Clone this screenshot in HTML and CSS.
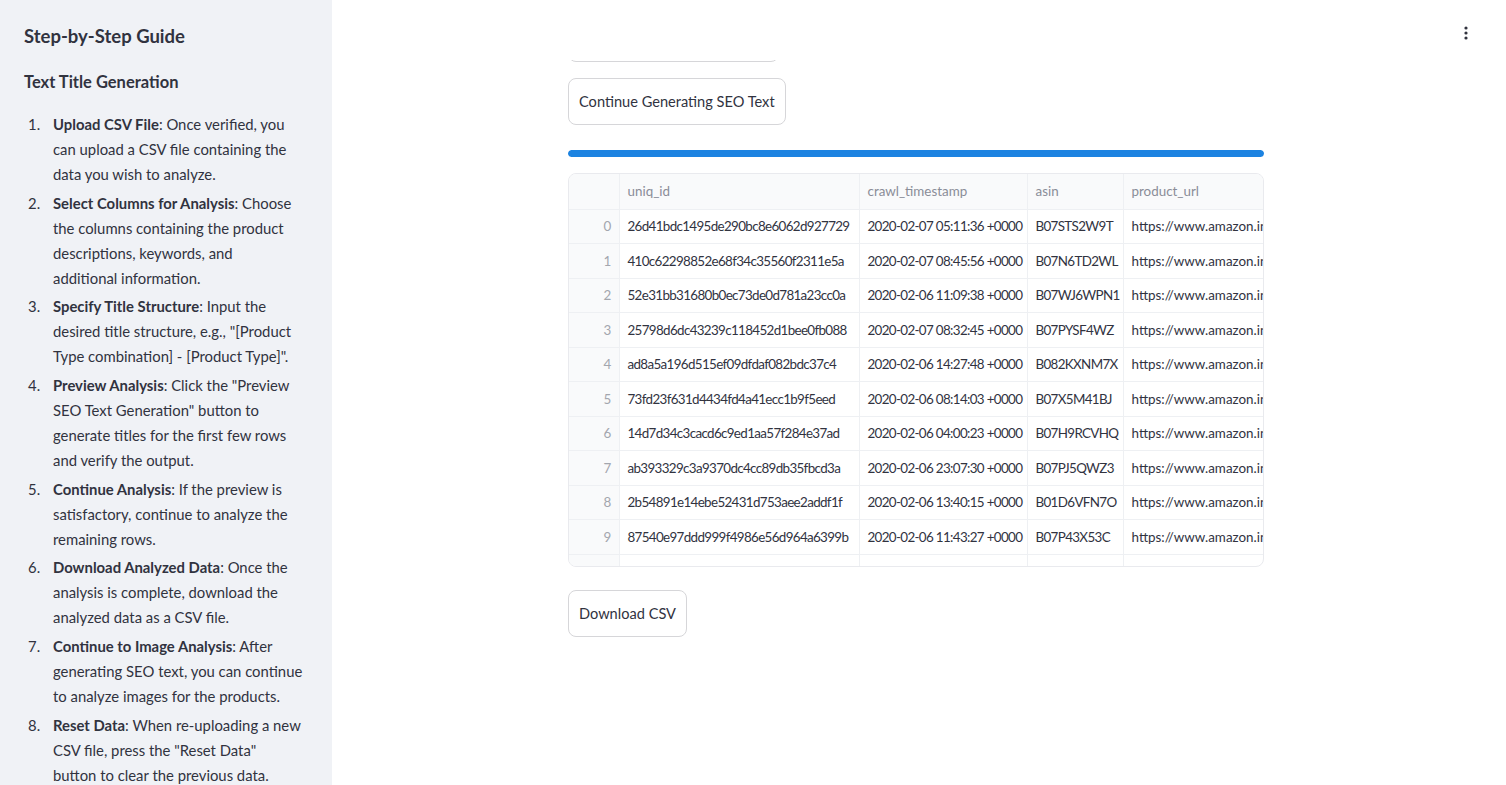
FILE: index.html
```html
<!DOCTYPE html>
<html lang="en">
<head>
<meta charset="utf-8">
<title>SEO Text Generation</title>
<link rel="stylesheet" href="styles.css">
</head>
<body>
<aside class="sidebar">
  <h2 class="guide-title">Step-by-Step Guide</h2>
  <h3 class="guide-sub">Text Title Generation</h3>
  <ol class="steps">
    <li><b>Upload CSV File</b>: Once verified, you can upload a CSV file containing the data you wish to analyze.</li>
    <li><b>Select Columns for Analysis</b>: Choose the columns containing the product descriptions, keywords, and <span class="nowrap">additional information.</span></li>
    <li><b>Specify Title Structure</b>: Input the desired title structure, e.g., "[Product Type combination] - [Product Type]".</li>
    <li><b>Preview Analysis</b>: Click the "Preview SEO Text Generation" button to generate titles for the first few rows and verify the output.</li>
    <li><b>Continue Analysis</b>: If the preview is satisfactory, continue to analyze the remaining rows.</li>
    <li><b>Download Analyzed Data</b>: Once the analysis is complete, download the analyzed data as a CSV file.</li>
    <li><b>Continue to Image Analysis</b>: After generating SEO text, you can continue to analyze images for the products.</li>
    <li><b>Reset Data</b>: When re-uploading a new CSV file, press the "Reset Data" <span class="nowrap">button to</span> clear the previous data.</li>
  </ol>
</aside>
<main class="main">
  <header class="topbar">
    <button class="menu" aria-label="menu">
      <svg width="4" height="14" viewBox="0 0 4 14"><circle cx="2" cy="2" r="1.6" fill="#31333f"/><circle cx="2" cy="7" r="1.6" fill="#31333f"/><circle cx="2" cy="12" r="1.6" fill="#31333f"/></svg>
    </button>
  </header>
  <div class="block">
    <button class="btn btn-hidden">Preview SEO Text Generation</button>
    <button class="btn">Continue Generating SEO Text</button>
    <div class="progress"><div class="progress-fill"></div></div>
    <div class="table-wrap">
      <table class="df">
        <thead>
          <tr><th class="idx"></th><th class="c1">uniq_id</th><th class="c2">crawl_timestamp</th><th class="c3">asin</th><th class="c4">product_url</th></tr>
        </thead>
        <tbody>
          <tr><td class="idx">0</td><td>26d41bdc1495de290bc8e6062d927729</td><td>2020-02-07 05:11:36 +0000</td><td>B07STS2W9T</td><td>https://www.amazon.in</td></tr>
          <tr><td class="idx">1</td><td>410c62298852e68f34c35560f2311e5a</td><td>2020-02-07 08:45:56 +0000</td><td>B07N6TD2WL</td><td>https://www.amazon.in</td></tr>
          <tr><td class="idx">2</td><td>52e31bb31680b0ec73de0d781a23cc0a</td><td>2020-02-06 11:09:38 +0000</td><td>B07WJ6WPN1</td><td>https://www.amazon.in</td></tr>
          <tr><td class="idx">3</td><td>25798d6dc43239c118452d1bee0fb088</td><td>2020-02-07 08:32:45 +0000</td><td>B07PYSF4WZ</td><td>https://www.amazon.in</td></tr>
          <tr><td class="idx">4</td><td>ad8a5a196d515ef09dfdaf082bdc37c4</td><td>2020-02-06 14:27:48 +0000</td><td>B082KXNM7X</td><td>https://www.amazon.in</td></tr>
          <tr><td class="idx">5</td><td>73fd23f631d4434fd4a41ecc1b9f5eed</td><td>2020-02-06 08:14:03 +0000</td><td>B07X5M41BJ</td><td>https://www.amazon.in</td></tr>
          <tr><td class="idx">6</td><td>14d7d34c3cacd6c9ed1aa57f284e37ad</td><td>2020-02-06 04:00:23 +0000</td><td>B07H9RCVHQ</td><td>https://www.amazon.in</td></tr>
          <tr><td class="idx">7</td><td>ab393329c3a9370dc4cc89db35fbcd3a</td><td>2020-02-06 23:07:30 +0000</td><td>B07PJ5QWZ3</td><td>https://www.amazon.in</td></tr>
          <tr><td class="idx">8</td><td>2b54891e14ebe52431d753aee2addf1f</td><td>2020-02-06 13:40:15 +0000</td><td>B01D6VFN7O</td><td>https://www.amazon.in</td></tr>
          <tr><td class="idx">9</td><td>87540e97ddd999f4986e56d964a6399b</td><td>2020-02-06 11:43:27 +0000</td><td>B07P43X53C</td><td>https://www.amazon.in</td></tr>
          <tr><td class="idx"></td><td></td><td></td><td></td><td></td></tr>
        </tbody>
      </table>
    </div>
    <button class="btn">Download CSV</button>
  </div>
</main>
</body>
</html>
```
FILE: styles.css
```css
*, *::before, *::after { box-sizing: border-box; }
html, body { margin: 0; height: 100%; }
body {
  display: flex;
  width: 1506px;
  height: 785px;
  overflow: hidden;
  font-family: Lato, "Open Sans", sans-serif;
  color: #31333f;
  background: #ffffff;
}
.sidebar {
  width: 332px;
  flex: 0 0 332px;
  height: 785px;
  overflow: hidden;
  background: #f0f2f6;
  padding: 22px 28px 0 24px;
}
.guide-title {
  margin: 0;
  font-size: 18.5px;
  font-weight: 700;
  line-height: 28px;
}
.guide-sub {
  margin: 19px 0 0;
  font-size: 16.5px;
  font-weight: 700;
  line-height: 26px;
}
.steps {
  list-style: none;
  counter-reset: step;
  margin: 17px 0 0;
  padding: 0;
  font-size: 14.85px;
  line-height: 25px;
}
.steps li {
  counter-increment: step;
  margin: 0 0 3.7px;
  padding-left: 29px;
}
.steps li::before {
  content: counter(step) ".";
  float: left;
  width: 29px;
  margin-left: -29px;
  padding-left: 4px;
}
.steps b { font-weight: 700; }
.nowrap { white-space: nowrap; }
.main {
  position: relative;
  flex: 1;
  height: 785px;
  overflow: hidden;
  display: flex;
  justify-content: center;
  padding-right: 6px;
}
.topbar {
  position: absolute;
  top: 0; left: 0; right: 0;
  height: 60px;
  background: #ffffff;
  z-index: 2;
}
.menu {
  position: absolute;
  top: 25px;
  right: 35px;
  border: 0;
  background: none;
  padding: 0;
  width: 10px;
  height: 16px;
  display: flex;
  align-items: center;
  justify-content: center;
}
.block {
  width: 696px;
  padding-top: 15px;
  display: flex;
  flex-direction: column;
  align-items: flex-start;
}
.btn {
  height: 47px;
  padding: 0 10px;
  border: 1px solid #d6d6d9;
  border-radius: 8px;
  background: #ffffff;
  color: #31333f;
  font-family: Lato, "Open Sans", sans-serif;
  font-size: 14.6px;
  line-height: 20px;
}
.btn-hidden { width: 211px; margin-bottom: 16px; }
.progress {
  width: 696px;
  height: 7px;
  margin: 25px 0 16px;
  background: #f0f2f6;
  border-radius: 4px;
  overflow: hidden;
}
.progress-fill { width: 100%; height: 100%; background: #1c83e1; border-radius: 4px; }
.table-wrap {
  width: 696px;
  height: 394px;
  border: 1px solid #e9eaee;
  border-radius: 8px;
  overflow: hidden;
  margin-bottom: 23px;
}
.df {
  border-collapse: collapse;
  table-layout: fixed;
  width: 760px;
  font-size: 13.4px;
}
.df th, .df td {
  height: 34.5px;
  padding: 0 8px;
  text-align: left;
  white-space: nowrap;
  overflow: hidden;
  border-right: 1px solid #eef0f3;
  border-bottom: 1px solid #eef0f3;
  font-weight: 400;
  letter-spacing: -0.65px;
}
.df thead th {
  height: 35px;
  color: #8a8d98;
  background: #f9fafb;
  letter-spacing: 0;
}
.df td { color: #31333f; }
.df td:last-child { letter-spacing: 0; }
.df .idx {
  width: 50px;
  text-align: right;
  color: #a3a6ae;
  background: #f9fafb;
}
.df .c1 { width: 240px; }
.df .c2 { width: 168px; }
.df .c3 { width: 96px; }
.df .c4 { width: 206px; }
.df td:last-child, .df th:last-child { border-right: 0; }
```
